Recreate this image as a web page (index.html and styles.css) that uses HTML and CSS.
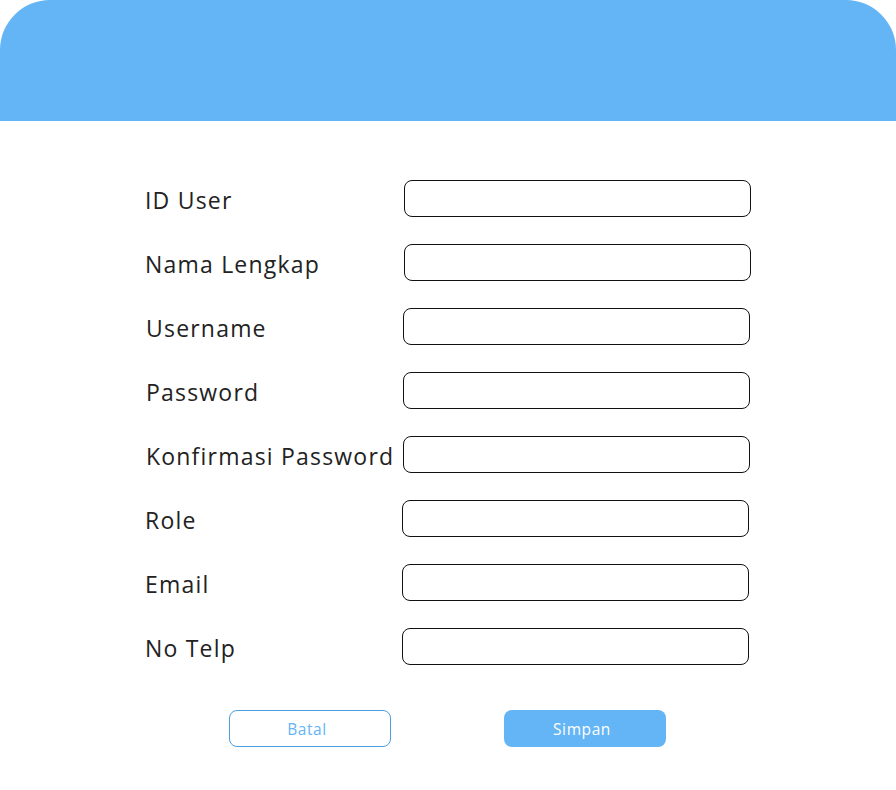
FILE: index.html
```html
<!DOCTYPE html>
<html>
<head>
<meta charset="utf-8">
<link rel="stylesheet" href="styles.css">
</head>
<body>
<div class="header"></div>
<form class="form">
  <div class="rows">
    <label class="label">ID User</label><div class="input r1"></div>
    <label class="label">Nama Lengkap</label><div class="input r1"></div>
    <label class="label l2">Username</label><div class="input"></div>
    <label class="label l2">Password</label><div class="input"></div>
    <label class="label l2">Konfirmasi Password</label><div class="input"></div>
    <label class="label">Role</label><div class="input r3"></div>
    <label class="label">Email</label><div class="input r3"></div>
    <label class="label">No Telp</label><div class="input r3"></div>
  </div>
  <div class="actions">
    <div class="btn btn-outline">Batal</div>
    <div class="btn btn-fill">Simpan</div>
  </div>
</form>
</body>
</html>
```
FILE: styles.css
```css
html, body {
  margin: 0;
  padding: 0;
  background: #ffffff;
  font-family: "Open Sans", "Liberation Sans", sans-serif;
}
.header {
  height: 121px;
  background: #64b5f6;
  border-radius: 50px 50px 0 0;
}
.form {
  padding-top: 59px;
}
.rows {
  display: grid;
  grid-template-columns: 258px 347px;
  grid-auto-rows: 37px;
  row-gap: 27px;
  margin-left: 145px;
}
.label {
  display: block;
  height: 37px;
  box-sizing: border-box;
  font-size: 23px;
  color: #222222;
  line-height: 37px;
  padding-top: 2px;
  letter-spacing: 1.2px;
  white-space: nowrap;
}
.l2 { margin-left: 1px; }
.input {
  height: 35px;
  border: 1px solid #111111;
  border-radius: 8px;
  width: 345px;
}
.r1 { margin-left: 1px; }
.r3 { margin-left: -1px; }
.actions {
  display: flex;
  gap: 113px;
  margin-top: 45px;
  margin-left: 229px;
}
.btn {
  width: 162px;
  height: 37px;
  box-sizing: border-box;
  border-radius: 8px;
  display: flex;
  align-items: center;
  justify-content: center;
  padding-right: 6px;
  font-size: 15.5px;
  letter-spacing: 0.6px;
}
.btn-outline {
  border: 1px solid #4a9fe0;
  color: #64b5f6;
}
.btn-fill {
  background: #64b5f6;
  color: #ffffff;
}
```
